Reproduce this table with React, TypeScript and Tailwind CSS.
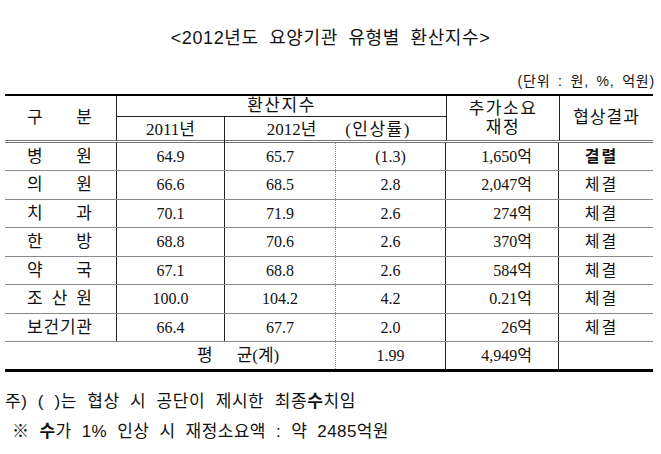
import React from "react";

const serif = { fontFamily: '"Liberation Serif", "Noto Sans CJK KR", serif' };
const sans = { fontFamily: '"Liberation Sans", "Noto Sans CJK KR", sans-serif' };

type Row = { a: string[]; y11: string; y12: string; rate: string; cost: string; res: string; bold?: boolean };

const rows: Row[] = [
  { a: ["병", "원"], y11: "64.9", y12: "65.7", rate: "(1.3)", cost: "1,650억", res: "결렬", bold: true },
  { a: ["의", "원"], y11: "66.6", y12: "68.5", rate: "2.8", cost: "2,047억", res: "체결" },
  { a: ["치", "과"], y11: "70.1", y12: "71.9", rate: "2.6", cost: "274억", res: "체결" },
  { a: ["한", "방"], y11: "68.8", y12: "70.6", rate: "2.6", cost: "370억", res: "체결" },
  { a: ["약", "국"], y11: "67.1", y12: "68.8", rate: "2.6", cost: "584억", res: "체결" },
  { a: ["조", "산", "원"], y11: "100.0", y12: "104.2", rate: "4.2", cost: "0.21억", res: "체결" },
  { a: ["보", "건", "기", "관"], y11: "66.4", y12: "67.7", rate: "2.0", cost: "26억", res: "체결" },
];

const heights = ["h-[28px]", "h-[29px]", "h-[28px]", "h-[29px]", "h-[28px]", "h-[29px]", "h-[28px]"];

export default function App() {
  return (
    <div className="w-[661px] h-[454px] bg-white text-[#111] overflow-hidden relative">
      <div className="pt-[26px] text-center text-[18px] leading-[24px] tracking-[0.6px] [word-spacing:5px]" style={sans}>
        &lt;2012년도 요양기관 유형별 환산지수&gt;
      </div>
      <div className="mt-[23px] pr-[6px] text-right text-[14px] leading-[16px] tracking-[0.8px] [word-spacing:3px]" style={sans}>
        (단위 : 원, %, 억원)
      </div>
      <div className="ml-[5px] mt-[5px] w-[648px]" style={serif}>
        <div className="h-[2px] bg-black" />
        <div className="flex h-[44px]">
          <div className="w-[112px] border-r border-[#222] flex items-center justify-between pl-[22px] pr-[24px] text-[17px]">
            <span>구</span>
            <span>분</span>
          </div>
          <div className="w-[329px] flex flex-col">
            <div className="h-[21px] border-b border-[#222] flex items-center justify-center text-[17px] tracking-[1.5px]">
              환산지수
            </div>
            <div className="flex-1 flex text-[17px]">
              <div className="w-[108px] border-r border-[#222] flex items-center justify-center">2011년</div>
              <div className="w-[111px] flex items-center justify-center pl-[22px]">2012년</div>
              <div className="w-[110px] flex items-center justify-center pr-[26px] tracking-[1.5px]">(인상률)</div>
            </div>
          </div>
          <div className="w-[113px] border-l border-[#222] flex flex-col items-center justify-center text-[17px] leading-[19px] tracking-[1.5px]">
            <span>추가소요</span>
            <span>재정</span>
          </div>
          <div className="w-[94px] border-l border-[#222] flex items-center justify-center text-[17px] tracking-[1px]">
            협상결과
          </div>
        </div>
        <div className="h-[1px] bg-[#777]" />
        <div className="h-[1px] bg-white" />
        <div className="h-[1px] bg-[#777]" />
        {rows.map((r, i) => (
          <div key={i} className={`flex ${heights[i]} border-b border-[#8a8a8a] text-[16px]`}>
            <div className="w-[112px] border-r border-[#222] flex items-center justify-between pl-[22px] pr-[24px] text-[17px]">
              {r.a.map((c, j) => (
                <span key={j}>{c}</span>
              ))}
            </div>
            <div className="w-[108px] border-r border-[#222] flex items-center justify-center">{r.y11}</div>
            <div className="w-[111px] border-r border-dotted border-[#888] flex items-center justify-center">{r.y12}</div>
            <div className="w-[110px] border-r border-[#222] flex items-center justify-center">{r.rate}</div>
            <div className="w-[113px] border-r border-[#222] flex items-center justify-end pr-[26px]">{r.cost}</div>
            <div className={`w-[93px] flex items-center justify-center pr-[8px] tracking-[2px] ${r.bold ? "font-bold" : ""}`}>
              {r.res}
            </div>
          </div>
        ))}
        <div className="flex h-[27px] text-[16px]">
          <div className="w-[331px] border-r border-dotted border-[#888] flex items-center pl-[192px] text-[17px]">
            <span>평</span>
            <span className="ml-[24px]">균(계)</span>
          </div>
          <div className="w-[110px] border-r border-[#222] flex items-center justify-center">1.99</div>
          <div className="w-[113px] border-r border-[#222] flex items-center justify-end pr-[26px]">4,949억</div>
          <div className="w-[93px]" />
        </div>
        <div className="h-[3px] bg-black" />
      </div>
      <div className="mt-[19px] pl-[5px] text-[17px] leading-[22px] tracking-[0.6px] [word-spacing:5px]" style={sans}>
        주) ( )는 협상 시 공단이 제시한 최종<span className="font-bold">수</span>치임
      </div>
      <div className="mt-[8px] pl-[12px] text-[17px] leading-[22px] tracking-[0.4px] [word-spacing:5px]" style={sans}>
        ※ <span className="font-bold">수</span>가 1% 인상 시 재정소요액 : 약 2485억원
      </div>
    </div>
  );
}
